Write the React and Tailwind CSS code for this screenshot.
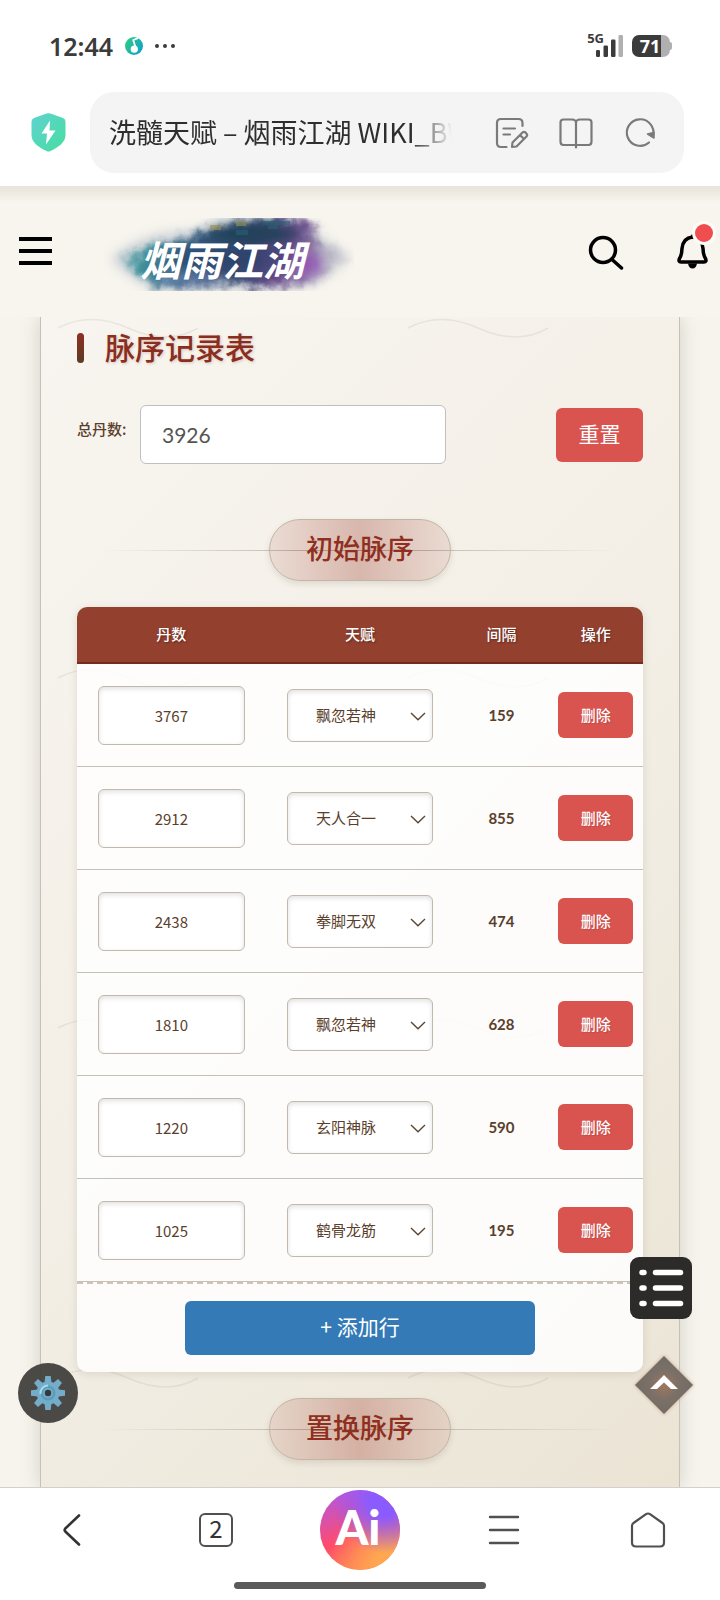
import { useState } from "react";

const TALENTS = ["飘忽若神", "天人合一", "拳脚无双", "玄阳神脉", "鹤骨龙筋"];

const INITIAL_ROWS = [
  { pills: 3767, talent: "飘忽若神", gap: 159 },
  { pills: 2912, talent: "天人合一", gap: 855 },
  { pills: 2438, talent: "拳脚无双", gap: 474 },
  { pills: 1810, talent: "飘忽若神", gap: 628 },
  { pills: 1220, talent: "玄阳神脉", gap: 590 },
  { pills: 1025, talent: "鹤骨龙筋", gap: 195 },
];

const StatusBar = () => (
  <div className="flex h-[92px] items-center justify-between pl-[49px] pr-12 text-[#3b3b3b]">
    <div className="flex items-center">
      <span className="font-['Noto_Sans',sans-serif] text-[25px] font-semibold leading-8">12:44</span>
      <svg className="ml-3 size-[18px]" viewBox="0 0 18 18">
        <defs>
          <linearGradient id="music" x1="0" y1="0" x2="1" y2="0.6">
            <stop offset="0" stopColor="#2fd07c" />
            <stop offset="1" stopColor="#12a5c4" />
          </linearGradient>
        </defs>
        <circle cx="9" cy="9" r="9" fill="url(#music)" />
        <path d="M13 1.200L8.200 3L10.800 11" fill="none" stroke="#fff" strokeWidth="1.800" strokeLinejoin="round" />
        <circle cx="9.300" cy="12.200" r="3.600" fill="#fff" />
      </svg>
      <svg className="ml-3 h-1 w-5" viewBox="0 0 20 4" fill="#3b3b3b">
        <circle cx="2" cy="2" r="2" />
        <circle cx="10" cy="2" r="2" />
        <circle cx="18" cy="2" r="2" />
      </svg>
    </div>

    <div className="flex items-center gap-[9px]">
      <div className="flex">
        <span className="-mr-2 font-['Noto_Sans',sans-serif] text-[13px] font-bold leading-[6px]">5G</span>
        <svg className="h-[22px] w-[27px]" viewBox="0 0 27 22" fill="#3b3b3b">
          <rect x="0" y="15" width="4" height="7" rx="1.200" />
          <rect x="7.500" y="10.500" width="4.500" height="11.500" rx="1.200" />
          <rect x="15" y="4.500" width="4.500" height="17.500" rx="1.200" />
          <rect x="22.500" y="0" width="4.500" height="22" rx="1.200" fill="#b0b0b0" />
        </svg>
      </div>
      <div className="flex items-center">
        <div className="flex h-[22px] w-[38px] items-center rounded-[7px] bg-linear-to-r from-[#3b3b3b] from-76% to-[#b0b0b0] to-76%">
          <span className="w-full pr-0.5 text-center font-['Noto_Sans',sans-serif] text-[18px] font-bold leading-5 text-white">
            71
          </span>
        </div>
        <div className="h-2 w-0.5 rounded-r-full bg-[#b0b0b0]" />
      </div>
    </div>
  </div>
);

const AddressBar = () => (
  <div className="flex items-center pb-[13px] pl-[31px] pr-9">
    <svg className="h-[39px] w-[35px] shrink-0" viewBox="0 0 35 39">
      <defs>
        <linearGradient id="shield" x1="0" y1="0" x2="1" y2="1">
          <stop offset="0" stopColor="#5ed3d0" />
          <stop offset="1" stopColor="#48dda0" />
        </linearGradient>
      </defs>
      <path
        d="M15.500.6Q17.500-.3 19.500.6L32 5Q34.500 6 34.500 8.500V22C34.500 29 28 34 19.500 38Q17.500 39 15.500 38C7 34 .5 29 .5 22V8.500Q.5 6 3 5Z"
        fill="url(#shield)"
      />
      <path d="M19 7.500L10.500 20.500H16L15 31.500L24.500 17.500H18.500Z" fill="#fff" />
    </svg>
    <div className="ml-6 flex h-[81px] min-w-0 flex-1 items-center rounded-3xl bg-[#f4f4f4] pl-[19px] pr-[27px]">
      <input
        aria-label="地址栏"
        readOnly
        defaultValue="洗髓天赋 – 烟雨江湖 WIKI_BWIKI"
        className="min-w-0 flex-1 bg-transparent font-['Noto_Sans_CJK_SC',sans-serif] text-[27px] text-[#2e2e2e] outline-none [mask-image:linear-gradient(to_right,black_88%,transparent_100%)]"
      />
      <div className="ml-[43px] flex items-center gap-[30px] text-[#7a7a7a]">
        <button aria-label="编辑">
          <svg className="h-8 w-[34px]" viewBox="0 0 34 32" fill="none" stroke="currentColor" strokeWidth="2.200" strokeLinecap="round" strokeLinejoin="round">
            <path d="M27.500 9V6Q27.500 2 23.500 2H6Q2 2 2 6V26Q2 30 6 30H11.500" />
            <path d="M8.500 11.500H20M8.500 17.500H15" />
            <path d="M17 30L17.500 25.500L27.500 15.500Q29 14.200 30.500 15.500L31.500 16.700Q32.800 18 31.500 19.500L21.500 29.500ZM25 18l4 4" />
          </svg>
        </button>
        <button aria-label="阅读模式">
          <svg className="h-8 w-[34px]" viewBox="0 0 34 32" fill="none" stroke="currentColor" strokeWidth="2.200" strokeLinecap="round" strokeLinejoin="round">
            <path d="M17 6Q17 2.500 13 2.500H4.500Q1.500 2.500 1.500 5.500V24.500Q1.500 28 4.500 28H29.500Q32.500 28 32.500 24.500V5.500Q32.500 2.500 29.500 2.500H21Q17 2.500 17 6V30.500" />
          </svg>
        </button>
        <button aria-label="刷新">
          <svg className="h-8 w-[34px]" viewBox="0 0 34 32" fill="none" stroke="currentColor" strokeWidth="2.200" strokeLinecap="round">
            <path d="M26 25.500A13.300 13.300 0 1 1 30 19" />
            <path d="M24.500 17L31 15.500V21Z" fill="currentColor" strokeLinejoin="round" strokeWidth="1.500" />
          </svg>
        </button>
      </div>
    </div>
  </div>
);

const Logo = () => (
  <svg className="h-[76px] w-[250px]" viewBox="0 0 250 76" role="img" aria-label="烟雨江湖">
    <defs>
      <filter id="ink" x="-10%" y="-20%" width="120%" height="140%">
        <feGaussianBlur stdDeviation="4" result="wash" />
        <feTurbulence type="fractalNoise" baseFrequency="0.07" numOctaves="4" seed="9" />
        <feDisplacementMap in="wash" scale="16" xChannelSelector="R" yChannelSelector="G" />
      </filter>
      <filter id="soft" x="-40%" y="-60%" width="180%" height="220%">
        <feGaussianBlur stdDeviation="6" />
      </filter>
      <linearGradient id="inkFill" x1="0" y1="0" x2="1" y2="0.1">
        <stop offset="0" stopColor="#8cb9bd" stopOpacity="0.4" />
        <stop offset="0.14" stopColor="#45969f" />
        <stop offset="0.35" stopColor="#35597d" />
        <stop offset="0.6" stopColor="#37466f" />
        <stop offset="0.78" stopColor="#6b4a8c" />
        <stop offset="0.88" stopColor="#8b7ba3" stopOpacity="0.8" />
        <stop offset="1" stopColor="#b4adbf" stopOpacity="0.3" />
      </linearGradient>
      <clipPath id="logoClip">
        <rect y="1" width="250" height="73" />
      </clipPath>
    </defs>
    <g clipPath="url(#logoClip)">
      <path d="M6 42Q40 12 92 14Q130-8 196 2Q216 20 236 34Q252 42 232 52Q206 76 158 72Q100 74 56 74Q30 66 6 42Z" fill="#8d9fb6" opacity="0.4" filter="url(#soft)" />
      <path d="M18 44Q40 26 70 23Q100 17 116 8Q160-2 204 4Q212 18 228 30Q262 44 234 50Q214 60 204 68Q160 72 128 66Q84 70 54 70Q34 60 18 44Z" fill="url(#inkFill)" filter="url(#ink)" />
      <ellipse cx="150" cy="17" rx="46" ry="9" fill="#1b4152" opacity="0.85" filter="url(#soft)" />
      <ellipse cx="120" cy="42" rx="62" ry="9" fill="#25406a" opacity="0.5" filter="url(#soft)" />
      <ellipse cx="85" cy="62" rx="34" ry="6" fill="#7a90bd" opacity="0.7" filter="url(#soft)" />
      <ellipse cx="204" cy="48" rx="14" ry="12" fill="#8f4ab5" opacity="0.75" filter="url(#soft)" />
      <path d="M106 8h11v5h-11zM132 4h10v5h-10z" fill="#9a9150" opacity="0.6" />
      <path d="M158 4h28v4h-12v4h-10v-4h-6zM132 13h12v5h-12z" fill="#2a6173" opacity="0.6" />
    </g>
    <text
      x="36"
      y="59"
      fill="#fff"
      className="font-['Noto_Sans_CJK_SC',sans-serif] text-[41px] font-bold italic"
    >
      烟雨江湖
    </text>
  </svg>
);

const SiteHeader = () => (
  <header className="flex h-[131px] items-center bg-[#f8f5ee] bg-[linear-gradient(to_bottom,#e7e3da,transparent_16px)] pb-0.5 pl-[19px] pr-3">
    <button aria-label="菜单" className="flex w-[33px] flex-col gap-2">
      <span className="h-1 bg-black" />
      <span className="h-1 bg-black" />
      <span className="h-1 bg-black" />
    </button>
    <a href="#home" className="ml-[52px] pt-2">
      <Logo />
    </a>
    <button aria-label="搜索" className="ml-auto pt-0.5">
      <svg className="size-9" viewBox="0 0 36 36" fill="none" stroke="#000" strokeWidth="3.500" strokeLinecap="round">
        <circle cx="15" cy="16" r="12.500" />
        <path d="M24 25.500L33.500 34" />
      </svg>
    </button>
    <button aria-label="通知" className="relative ml-[53px]">
      <svg className="h-9 w-[31px]" viewBox="0 0 31 36" fill="none" stroke="#000" strokeWidth="3.500" strokeLinejoin="round">
        <path d="M15.500 4Q25 5 26 15.500Q26.200 22 28.500 25.500Q30 29 27 29H4Q1 29 2.500 25.500Q4.800 22 5 15.500Q6 5 15.500 4Z" />
        <path d="M13.500 4.500L15.500 1L17.500 4.500" fill="#000" strokeWidth="1" />
        <path d="M11 30.500H20Q19 35.500 15.500 35.500Q12 35.500 11 30.500Z" fill="#000" stroke="none" />
      </svg>
      <span className="absolute -right-2 -top-3 size-6 rounded-full border-[3px] border-[#fdfcf9] bg-[#f04e4e]" />
    </button>
  </header>
);

const SectionDivider = ({ children }) => (
  <div className="grid place-items-center *:[grid-area:1/1]">
    <div className="h-px w-11/12 bg-linear-to-r from-transparent via-[#b5a99b] to-transparent" />
    <h3 className="z-10 flex h-[62px] items-center rounded-full border border-[#c3b5a5] bg-linear-to-r from-[#9b3a2a]/12 via-[#9b3a2a]/32 to-[#9b3a2a]/12 px-9 pb-1 text-[27px] font-medium text-[#8e2f20] shadow-[0_3px_6px_rgba(90,70,50,0.14)]">
      {children}
    </h3>
  </div>
);

const RecordTable = ({ rows, setRows }) => {
  const update = (index, patch) =>
    setRows(rows.map((row, i) => (i === index ? { ...row, ...patch } : row)));

  return (
    <div className="overflow-hidden rounded-[10px] bg-white/85 shadow-[0_2px_8px_rgba(90,70,50,0.14)]">
      <table className="w-full table-fixed border-separate border-spacing-0 text-center text-[15px]">
        <thead className="bg-[#93402f] text-white text-shadow-[1px_1px_2px_rgba(0,0,0,0.35)]">
          <tr className="*:h-[57px] *:border-b-2 *:border-[#742c20] *:font-medium">
            <th className="w-1/3">丹数</th>
            <th className="w-1/3">天赋</th>
            <th className="w-1/6">间隔</th>
            <th className="w-1/6">操作</th>
          </tr>
        </thead>
        <tbody className="text-[#5a402c]">
          {rows.map((row, i) => (
            <tr key={i} className="*:h-[103px] *:border-b *:border-[#c6c0b6]">
              <td className="px-[21px]">
                <input
                  aria-label="丹数"
                  value={row.pills}
                  onChange={(e) => update(i, { pills: e.target.value })}
                  className="h-[59px] w-full rounded-md border border-[#c2b8ab] bg-white text-center inset-shadow-[0_2px_5px_rgba(0,0,0,0.12)]"
                />
              </td>
              <td className="px-[21px]">
                <div className="relative">
                  <select
                    aria-label="天赋"
                    value={row.talent}
                    onChange={(e) => update(i, { talent: e.target.value })}
                    className="h-[53px] w-full appearance-none rounded-md border border-[#c2b8ab] bg-white pr-7 text-center [text-align-last:center] inset-shadow-[0_2px_5px_rgba(0,0,0,0.12)]"
                  >
                    {TALENTS.map((talent) => (
                      <option key={talent}>{talent}</option>
                    ))}
                  </select>
                  <svg className="pointer-events-none absolute right-[7px] top-[23px] h-[9px] w-4" viewBox="0 0 16 9" fill="none" stroke="#5a4634" strokeWidth="1.400">
                    <path d="M1 1L8 7.800L15 1" />
                  </svg>
                </div>
              </td>
              <td className="font-['Lato',sans-serif] font-bold">{row.gap}</td>
              <td>
                <button
                  onClick={() => setRows(rows.filter((_, j) => j !== i))}
                  className="h-[46px] w-[75px] rounded-md bg-[#d9534f] font-medium text-white text-shadow-[1px_1px_1px_rgba(0,0,0,0.12)]"
                >
                  删除
                </button>
              </td>
            </tr>
          ))}
        </tbody>
      </table>
      <div className="flex h-[90px] items-center justify-center border-t-2 border-dashed border-[#d0c4b6]">
        <button
          onClick={() => setRows([...rows, { pills: "", talent: TALENTS[0], gap: 0 }])}
          className="h-[54px] w-[350px] rounded-md bg-[#337ab7] pb-0.5 text-[21px] text-white"
        >
          + 添加行
        </button>
      </div>
    </div>
  );
};

const Waves = () => (
  <svg className="pointer-events-none absolute inset-0 size-full" aria-hidden="true">
    <defs>
      <pattern id="waves" width="350" height="350" patternUnits="userSpaceOnUse">
        <path d="M17 10C32 2 56-4 87 10S140 20 157 10" transform="translate(0 1)" fill="none" stroke="#8b7c68" strokeOpacity="0.13" strokeWidth="1.500" />
      </pattern>
    </defs>
    <rect width="100%" height="100%" fill="url(#waves)" />
  </svg>
);

const FloatingTools = () => (
  <>
    <button aria-label="设置" className="absolute bottom-16 left-[18px] grid size-[60px] place-items-center rounded-full bg-[#41403d]/95">
      <svg className="size-[34px]" viewBox="-17 -17 34 34">
        <g fill="#74adc9">
          {[0, 45, 90, 135, 180, 225, 270, 315].map((angle) => (
            <path key={angle} d="M-3.500-10L-2.700-17H2.700L3.500-10Z" transform={`rotate(${angle})`} />
          ))}
          <circle r="11.500" />
        </g>
        <circle r="7.500" fill="#5b9cbb" />
        <path d="M-7.500 1A7.500 7.500 0 0 1 0-7.500" fill="none" stroke="#a6dcec" strokeWidth="2" />
        <circle r="5" fill="#74adc9" />
        <circle r="3.200" fill="#383836" />
      </svg>
    </button>
    <button aria-label="目录" className="absolute bottom-[168px] right-7 grid size-[62px] place-items-center rounded-[9px] bg-[#2d2b2a]">
      <svg className="h-[38px] w-[46px]" viewBox="0 0 46 38" stroke="#fff" strokeWidth="5.500" strokeLinecap="round">
        <path d="M4 3.500h2M17.500 3.500h25M4 19h2M17.500 19h25M4 34.500h2M17.500 34.500h25" />
      </svg>
    </button>
    <button aria-label="返回顶部" className="absolute bottom-[71px] right-[25px]">
      <svg className="size-[62px]" viewBox="0 0 62 62">
        <defs>
          <radialGradient id="topGlow">
            <stop offset="0" stopColor="#a0775d" />
            <stop offset="0.5" stopColor="#7b7067" />
            <stop offset="1" stopColor="#716c66" />
          </radialGradient>
          <filter id="topBlur" x="-10%" y="-10%" width="120%" height="120%">
            <feGaussianBlur stdDeviation="1.500" />
          </filter>
        </defs>
        <path d="M31 1L61 31L31 61L1 31Z" fill="#c7a58c" opacity="0.7" filter="url(#topBlur)" />
        <path d="M31 2L60 31L31 60L2 31Z" fill="url(#topGlow)" />
        <path d="M17 35L31 21L45 35H38L31 28.500L24 35Z" fill="#fff" />
      </svg>
    </button>
  </>
);

const BottomNav = () => (
  <footer className="border-t border-[#d2d0cc] bg-white">
    <nav className="grid h-[83px] grid-cols-5 place-items-center text-[#505050]">
      <button aria-label="后退">
        <svg className="h-8 w-5" viewBox="0 0 20 32" fill="none" stroke="#333" strokeWidth="2.600" strokeLinecap="round" strokeLinejoin="round">
          <path d="M17 1.500L3.300 14.500Q2 16 3.300 17.500L17 30.500" />
        </svg>
      </button>
      <button
        aria-label="标签页"
        className="grid size-[34px] place-items-center rounded-md border-2 border-[#505050] pb-1 font-['Noto_Sans_CJK_SC',sans-serif] text-2xl leading-none text-[#333]"
      >
        2
      </button>
      <button className="grid size-[80px] place-items-center rounded-full bg-[linear-gradient(160deg,#b956dd_8%,#ff4b6a_55%,#ff7a55_85%)]">
        <span className="grid size-full place-items-center rounded-full bg-[radial-gradient(circle_at_80%_15%,#8a5cff_15%,transparent_55%),radial-gradient(circle_at_85%_90%,#ffa850_10%,transparent_60%)] pb-1 pr-1 font-['Lato',sans-serif] text-[47px] font-black leading-none text-white">
          Ai
        </span>
      </button>
      <button aria-label="菜单">
        <svg className="h-[30px] w-8" viewBox="0 0 32 30" stroke="currentColor" strokeWidth="2.400" strokeLinecap="round">
          <path d="M2 2h28M2 15h28M2 28h28" />
        </svg>
      </button>
      <button aria-label="主页">
        <svg className="size-9" viewBox="0 0 36 36" fill="none" stroke="currentColor" strokeWidth="2.200" strokeLinejoin="round">
          <path d="M16 2.200Q18 .8 20 2.200L32.500 11Q34 12 34 14V30.500Q34 34.500 30 34.500H6Q2 34.500 2 30.500V14Q2 12 3.500 11Z" />
        </svg>
      </button>
    </nav>
    <div className="mx-auto my-[11px] h-[7px] w-[35%] rounded-full bg-[#5a5a5a]" />
  </footer>
);

export default function App() {
  const [rows, setRows] = useState(INITIAL_ROWS);
  const [total, setTotal] = useState("3926");

  return (
    <div className="flex min-h-screen flex-col bg-white font-['Noto_Sans_CJK_SC',sans-serif]">
      <StatusBar />
      <AddressBar />
      <SiteHeader />

      <main className="relative flex flex-1 flex-col overflow-hidden bg-[#f7f4ed] px-10">
        <section className="relative flex-1 border-x border-[#c6c1b5] bg-linear-135 from-[#f8f5f0] via-[#f3efe6] to-[#ebe4d5] px-9 pb-[26px] pt-[13px] shadow-[0_0_18px_rgba(80,85,70,0.22)]">
          <Waves />
          <div className="relative">
            {/* Title */}
            <div className="flex h-8 items-center gap-[21px]">
              <span className="mt-1 h-[30px] w-[7px] rounded-sm bg-linear-to-b from-[#8e2f20] to-[#5a3a26]" />
              <h2 className="text-[30px] font-medium leading-8 text-[#8a2e20] text-shadow-[1px_1px_3px_rgba(120,50,30,0.25)]">
                脉序记录表
              </h2>
            </div>

            {/* Total */}
            <div className="mt-[43px] flex items-center">
              <label htmlFor="total" className="w-[63px] shrink-0 pb-2.5 text-[15px] font-medium text-[#5a402c]">
                总丹数:
              </label>
              <input
                id="total"
                value={total}
                onChange={(e) => setTotal(e.target.value)}
                className="h-[59px] w-[306px] min-w-0 rounded-md border border-[#bfbfc4] bg-white px-[21px] font-['Lato',sans-serif] text-[21px] text-[#555]"
              />
              <button
                onClick={() => setTotal("")}
                className="ml-auto h-[54px] w-[87px] shrink-0 rounded-md bg-[#d9534f] pb-0.5 text-[21px] text-white"
              >
                重置
              </button>
            </div>

            <div className="mb-[26px] mt-[55px]">
              <SectionDivider>初始脉序</SectionDivider>
            </div>
            <RecordTable rows={rows} setRows={setRows} />
            <div className="mt-[26px]">
              <SectionDivider>置换脉序</SectionDivider>
            </div>
          </div>
        </section>
        <FloatingTools />
      </main>

      <BottomNav />
    </div>
  );
}
